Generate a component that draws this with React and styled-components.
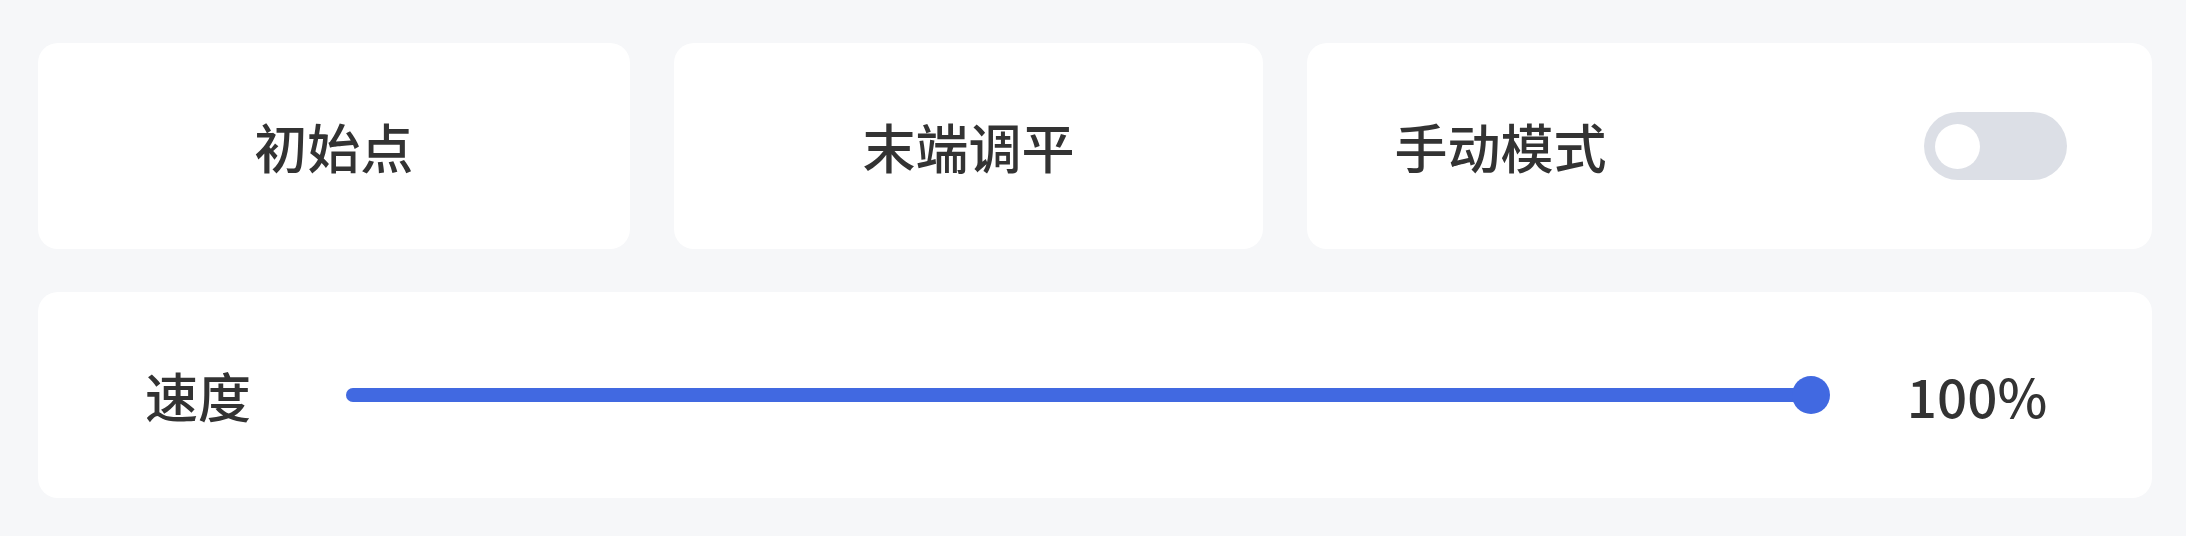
import React, { useState } from 'react'
import styled, { createGlobalStyle } from 'styled-components'

const GlobalStyle = createGlobalStyle`
  html, body {
    margin: 0;
    padding: 0;
    background: #f6f7f9;
  }

  body {
    font-family: "Noto Sans CJK SC", "Noto Sans", sans-serif;
    color: #333333;
  }
`

const Page = styled.div`
  padding: 43px 34px 38px 38px;
  display: flex;
  flex-direction: column;
  gap: 43px;
`

const TopRow = styled.div`
  display: grid;
  grid-template-columns: 592fr 590fr 845fr;
  gap: 44px;
`

const Card = styled.div`
  background: #ffffff;
  border-radius: 20px;
  height: 206px;
  box-sizing: border-box;
  display: flex;
  align-items: center;
  justify-content: ${props => (props.spread ? 'space-between' : 'center')};
  padding: ${props => (props.spread ? '0 85px 0 87px' : '0')};
`

const ButtonLabel = styled.span`
  font-size: 53px;
  font-weight: 500;
  line-height: 1;
`

const Toggle = styled.button`
  width: 143px;
  height: 68px;
  border: none;
  border-radius: 34px;
  background: ${props => (props.on ? '#4169e1' : '#dcdfe6')};
  padding: 0 11px;
  display: flex;
  align-items: center;
  justify-content: ${props => (props.on ? 'flex-end' : 'flex-start')};
  cursor: pointer;
`

const Knob = styled.span`
  width: 45px;
  height: 45px;
  border-radius: 50%;
  background: #ffffff;
`

const SpeedCard = styled(Card)`
  display: grid;
  grid-template-columns: 200px 1fr 230px;
  padding: 0 60px;
`

const SpeedLabel = styled.span`
  font-size: 53px;
  font-weight: 500;
  line-height: 1;
  text-align: center;
`

const SliderCell = styled.div`
  padding: 0 51px 0 48px;
`

const Track = styled.div`
  position: relative;
  height: 14px;
  border-radius: 7px;
  background: #e4e7ed;
`

const Fill = styled.div`
  height: 100%;
  border-radius: 7px;
  background: #4169e1;
`

const Thumb = styled.span`
  position: absolute;
  top: 50%;
  width: 38px;
  height: 38px;
  margin: -19px 0 0 -19px;
  border-radius: 50%;
  background: #4169e1;
`

const Value = styled.span`
  font-size: 53px;
  font-weight: 500;
  line-height: 1;
  text-align: center;
`

export default function App() {
  const [manual, setManual] = useState(false)
  const speed = 100

  return (
    <>
      <GlobalStyle />
      <Page>
        <TopRow>
          <Card>
            <ButtonLabel>初始点</ButtonLabel>
          </Card>
          <Card>
            <ButtonLabel>末端调平</ButtonLabel>
          </Card>
          <Card spread>
            <ButtonLabel>手动模式</ButtonLabel>
            <Toggle on={manual} onClick={() => setManual(!manual)}>
              <Knob />
            </Toggle>
          </Card>
        </TopRow>
        <SpeedCard>
          <SpeedLabel>速度</SpeedLabel>
          <SliderCell>
            <Track>
              <Fill style={{ width: `${speed}%` }} />
              <Thumb style={{ left: `${speed}%` }} />
            </Track>
          </SliderCell>
          <Value>{speed}%</Value>
        </SpeedCard>
      </Page>
    </>
  )
}
